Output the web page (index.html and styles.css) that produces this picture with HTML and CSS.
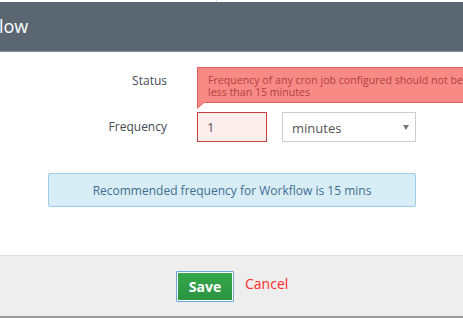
FILE: index.html
```html
<!DOCTYPE html>
<html>
<head>
<meta charset="utf-8">
<link rel="stylesheet" href="styles.css">
</head>
<body>
<div class="page">
  <div class="topstrip"><span class="tick"></span></div>
  <div class="modal">
    <div class="header"><span class="title">low</span></div>
    <div class="content">
      <div class="row status-row">
        <label class="label">Status</label>
        <div class="control"></div>
      </div>
      <div class="row">
        <label class="label">Frequency</label>
        <div class="control">
          <div class="input-wrap">
            <div class="tooltip">Frequency of any cron job configured should not be<br>less than 15 minutes</div>
            <div class="input error">1</div>
          </div>
          <div class="select">
            <span>minutes</span>
            <span class="caret"></span>
          </div>
        </div>
      </div>
      <div class="info">Recommended frequency for Workflow is 15 mins</div>
    </div>
    <div class="footer">
      <button class="btn-save">Save</button>
      <a class="cancel">Cancel</a>
    </div>
  </div>
</div>
</body>
</html>
```
FILE: styles.css
```css
html, body {
  margin: 0;
  padding: 0;
  background: #ffffff;
  overflow: hidden;
}
body {
  font-family: "Open Sans", "Liberation Sans", sans-serif;
  width: 463px;
  height: 318px;
}
.page {
  width: 463px;
  height: 318px;
  overflow: hidden;
}
.topstrip {
  height: 2px;
  background: #ffffff;
  display: flex;
}
.tick {
  margin-left: 216px;
  width: 1px;
  height: 2px;
  background: #dcdcdc;
}
.header {
  height: 49px;
  background: #5a6773;
  border-bottom: 1px solid #8b939a;
  display: flex;
  align-items: center;
}
.title {
  color: #ffffff;
  font-size: 18px;
  margin-left: -1px;
  margin-top: -1px;
}
.content {
  height: 203px;
  padding-top: 14px;
  box-sizing: border-box;
  background: #ffffff;
}
.row {
  display: flex;
  align-items: center;
  height: 30px;
}
.status-row {
  margin-bottom: 16px;
}
.label {
  width: 167px;
  text-align: right;
  font-size: 12px;
  color: #444d55;
  margin-right: 30px;
}
.row .label {
  margin-top: -2px;
}
.control {
  display: flex;
  align-items: center;
  gap: 15px;
}
.input-wrap {
  position: relative;
}
.input {
  width: 70px;
  height: 30px;
  box-sizing: border-box;
  font-size: 13px;
  color: #555;
  padding-left: 9px;
  display: flex;
  align-items: center;
}
.input.error {
  background: #fdeded;
  border: 1px solid #c8433f;
}
.tooltip {
  position: absolute;
  left: 0;
  top: -45px;
  width: 300px;
  height: 36px;
  box-sizing: border-box;
  background: #f88a86;
  border: 1px solid #e0605c;
  border-right: none;
  color: #b3403c;
  font-size: 10.6px;
  line-height: 12px;
  padding: 6px 0 0 10px;
  white-space: nowrap;
  overflow: hidden;
}
.input-wrap::before {
  content: "";
  position: absolute;
  left: 0;
  top: -10px;
  width: 0;
  height: 0;
  border-top: 7px solid #e0605c;
  border-right: 8px solid transparent;
}
.input-wrap::after {
  content: "";
  position: absolute;
  left: 1px;
  top: -10px;
  width: 0;
  height: 0;
  border-top: 5px solid #f88a86;
  border-right: 6px solid transparent;
}
.select {
  width: 134px;
  height: 30px;
  box-sizing: border-box;
  border: 1px solid #cccccc;
  background: #ffffff;
  display: flex;
  align-items: center;
  justify-content: space-between;
  padding: 0 6px 0 9px;
  font-size: 13px;
  color: #555;
}
.select span:first-child {
  margin-top: 2px;
}
.caret {
  width: 0;
  height: 0;
  border-left: 3px solid transparent;
  border-right: 3px solid transparent;
  border-top: 5px solid #777;
  margin-top: 1px;
}
.info {
  margin: 31px 0 0 48px;
  width: 368px;
  height: 34px;
  box-sizing: border-box;
  background: #d9edf7;
  border: 1px solid #9fcde8;
  border-radius: 2px;
  color: #3d6f8e;
  font-size: 12px;
  display: flex;
  align-items: center;
  justify-content: center;
}
.footer {
  background: #eeeeee;
  border-top: 1px solid #dddddd;
  border-bottom: 2px solid #9a9a9a;
  display: flex;
  align-items: flex-start;
  padding-left: 176px;
  box-sizing: border-box;
  height: 63px;
  padding-top: 15px;
}
.btn-save {
  width: 58px;
  height: 31px;
  box-sizing: border-box;
  border: 1px solid #6fa4d8;
  box-shadow: inset 0 0 0 1px #ffffff;
  background: linear-gradient(#35a84b, #2a9340);
  color: #ffffff;
  font-family: "Open Sans", "Liberation Sans", sans-serif;
  font-weight: bold;
  font-size: 14px;
  padding: 0;
  margin: 0;
  border-radius: 1px;
}
.cancel {
  color: #ff2a2a;
  font-size: 14px;
  margin-left: 11px;
  margin-top: 3px;
}
```
